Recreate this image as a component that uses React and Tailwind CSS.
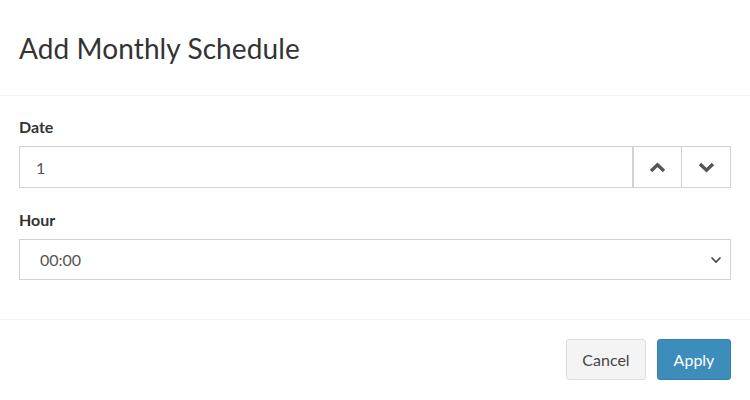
import React from "react";

function Chevron({ up }) {
  return (
    <svg width="17" height="11" viewBox="0 0 17 11">
      <path
        d={up ? "M2 9 L8.5 2.8 L15 9" : "M2 2 L8.5 8.2 L15 2"}
        fill="none"
        stroke="#555"
        strokeWidth="3.4"
        strokeLinejoin="miter"
      />
    </svg>
  );
}

function SelectArrow() {
  return (
    <svg width="12" height="8" viewBox="0 0 12 8" className="pointer-events-none absolute right-[9px] top-[17px]">
      <path d="M1.5 1.5 L6 6 L10.5 1.5" fill="none" stroke="#444" strokeWidth="1.6" />
    </svg>
  );
}

export default function App() {
  return (
    <div className="w-[750px] h-[400px] bg-white text-[#333] font-['Lato','Liberation_Sans',sans-serif] flex flex-col">
      {/* header */}
      <div className="h-[96px] border-b border-[#f4f4f4] px-[19px] flex items-center">
        <h4 className="text-[28px] leading-none text-[#333] tracking-[0.1px]">Add Monthly Schedule</h4>
      </div>

      {/* body */}
      <div className="h-[223px] px-[19px] pt-[20px] flex flex-col">
        <label className="text-[16px] font-bold leading-[22px] mb-[8px]">Date</label>
        <div className="flex h-[42px] border border-[#d2d2d2]">
          <input
            type="text"
            defaultValue="1"
            className="flex-1 h-full pl-[16px] text-[16px] text-[#555] outline-none border-r-2 border-[#d2d2d2]"
          />
          <button className="w-[48px] h-full flex items-center justify-center border-r border-[#d2d2d2]">
            <Chevron up />
          </button>
          <button className="w-[48px] h-full flex items-center justify-center">
            <Chevron />
          </button>
        </div>

        <label className="text-[16px] font-bold leading-[22px] mt-[21px] mb-[8px]">Hour</label>
        <div className="relative h-[41px]">
          <select
            defaultValue="00:00"
            className="appearance-none w-full h-full border border-[#d2d2d2] bg-white pl-[20px] text-[16px] text-[#555] outline-none"
          >
            <option>00:00</option>
            <option>01:00</option>
            <option>02:00</option>
          </select>
          <SelectArrow />
        </div>
      </div>

      {/* footer */}
      <div className="flex-1 border-t border-[#f4f4f4] px-[19px] pt-[19px] flex justify-end gap-[11px]">
        <button className="h-[41px] w-[80px] rounded-[3px] border border-[#ddd] bg-[#f4f4f4] text-[16px] text-[#444]">
          Cancel
        </button>
        <button className="h-[41px] w-[74px] rounded-[3px] border border-[#367fa9] bg-[#3c8dbc] text-[16px] text-white">
          Apply
        </button>
      </div>
    </div>
  );
}
